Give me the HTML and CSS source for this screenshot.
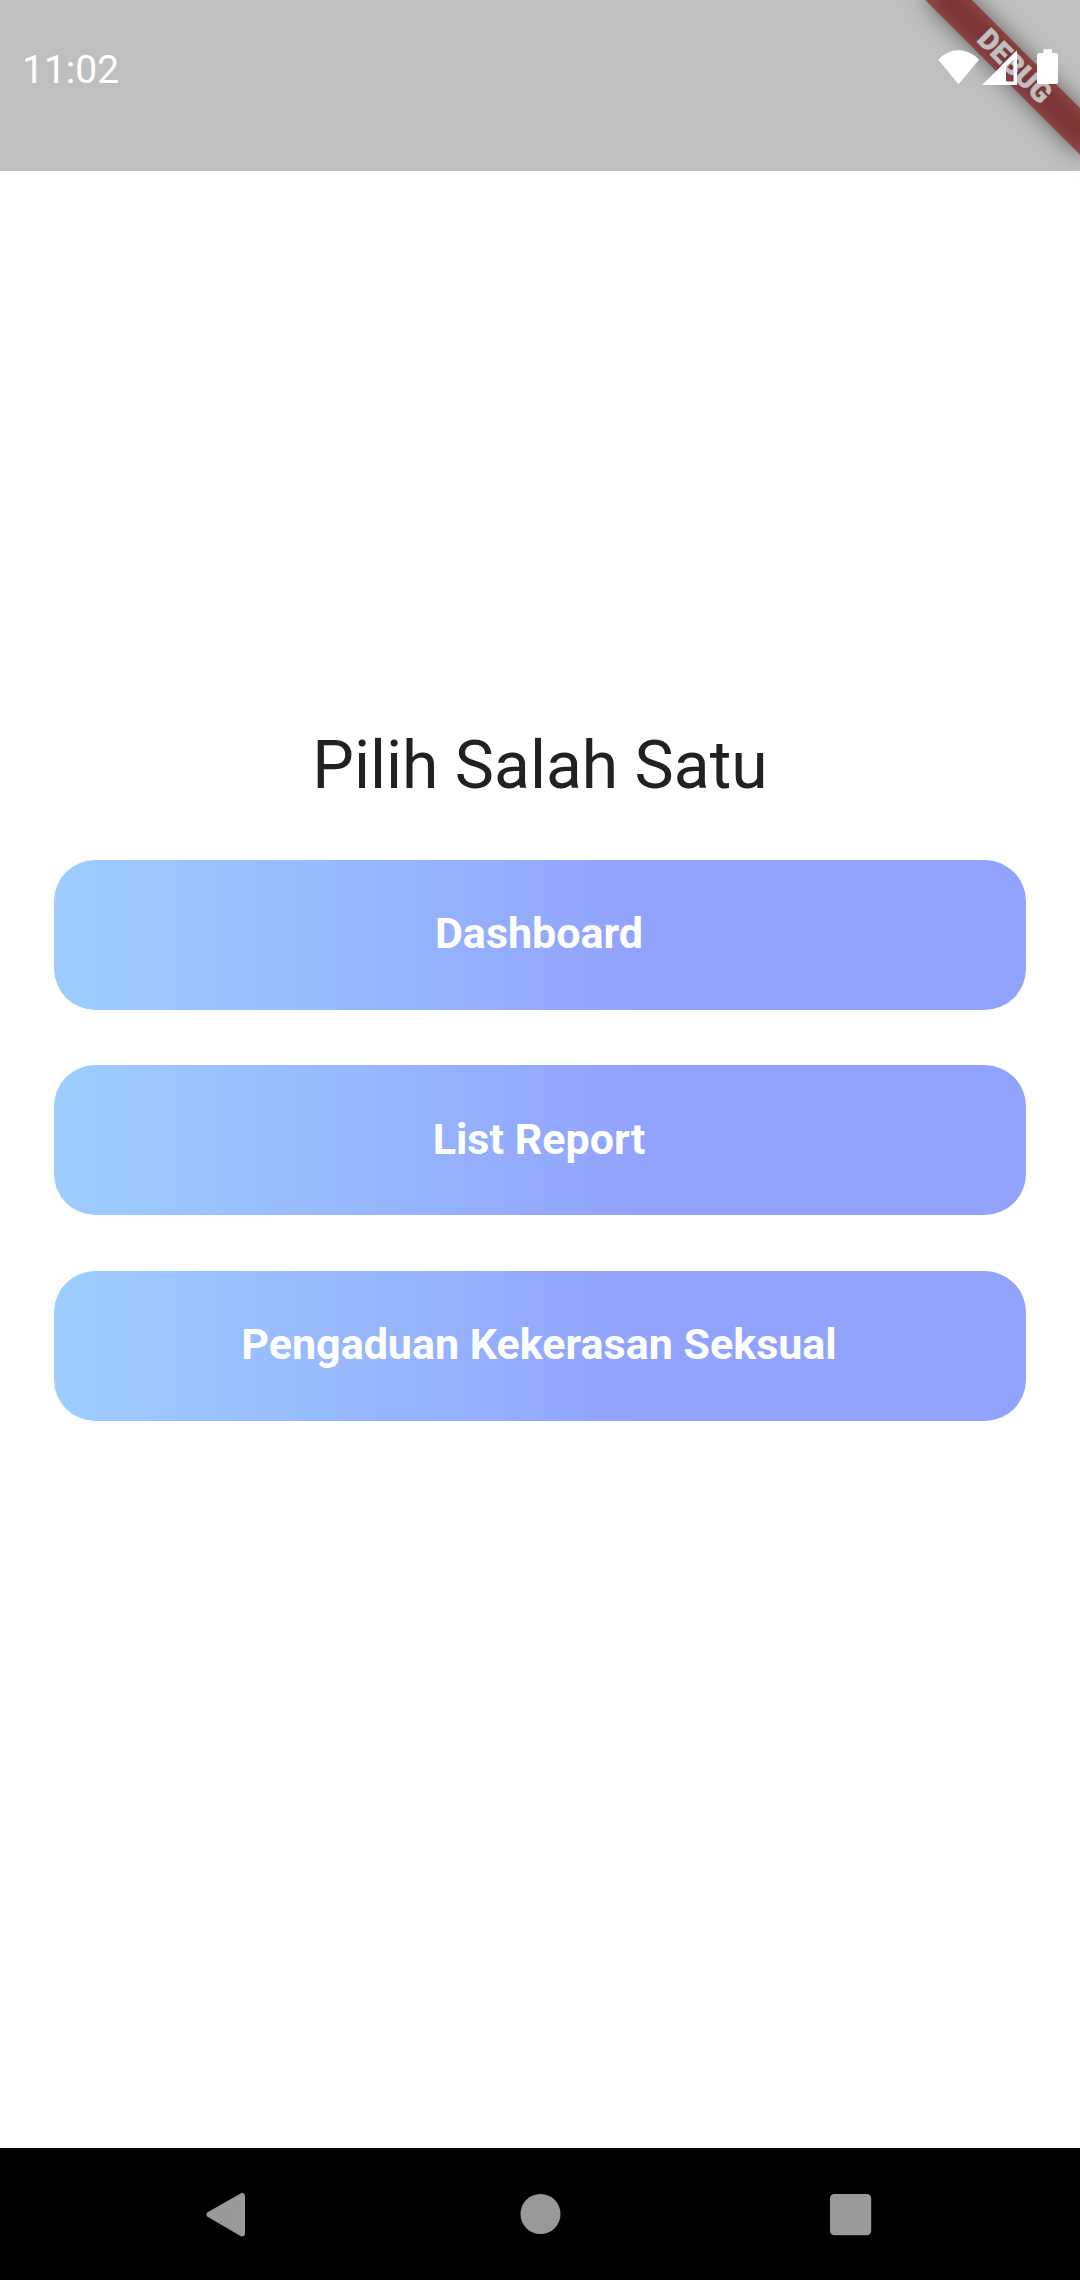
FILE: index.html
```html
<!DOCTYPE html>
<html lang="id">
<head>
<meta charset="utf-8">
<title>Pilih Salah Satu</title>
<link rel="stylesheet" href="styles.css">
</head>
<body>
<div class="screen">
  <div class="banner-clip">
    <div class="banner-shadow"></div>
    <div class="banner">DEBUG</div>
  </div>
  <header class="status-bar">
    <time class="clock">11:02</time>
    <svg class="status-icons" width="130" height="50" viewBox="935 40 130 50" fill="#fff" aria-hidden="true">
      <path d="M938.3 59.8Q947 50.3 958.6 50.3T979 59.8L958.6 84.3Z"/>
      <path fill-rule="evenodd" d="M982 85L1017 50.5V85ZM1006 66.5V81.5H1013.5V59.5Z"/>
      <path d="M1043.5 49.3H1052V53H1055.500Q1058 53 1058 55.500V81.500Q1058 84 1055.500 84H1039.500Q1037 84 1037 81.500V55.500Q1037 53 1039.500 53H1043.500Z"/>
    </svg>
  </header>
  <main class="content">
    <h1 class="title">Pilih Salah Satu</h1>
    <nav class="menu">
      <button class="menu-button">Dashboard</button>
      <button class="menu-button">List Report</button>
      <button class="menu-button">Pengaduan Kekerasan Seksual</button>
    </nav>
  </main>
  <footer class="nav-bar">
    <svg width="50" height="50" viewBox="0 0 50 50" aria-hidden="true"><path d="M8.500 25.500L41 7V44.500Z" fill="#999" stroke="#999" stroke-width="6" stroke-linejoin="round"/></svg>
    <svg width="50" height="50" viewBox="0 0 50 50" aria-hidden="true"><circle cx="26.500" cy="25" r="20" fill="#999"/></svg>
    <svg width="50" height="50" viewBox="0 0 50 50" aria-hidden="true"><rect x="4" y="5" width="41.200" height="41.200" rx="4.500" fill="#999"/></svg>
  </footer>
</div>
</body>
</html>
```
FILE: styles.css
```css
* { box-sizing: border-box; }

body {
  margin: 0;
  background: #fff;
  font-family: Roboto, "Liberation Sans", sans-serif;
}

.screen {
  position: relative;
  display: flex;
  flex-direction: column;
  width: 1080px;
  height: 2280px;
  overflow: hidden;
}

.status-bar {
  position: relative;
  display: flex;
  justify-content: space-between;
  height: 171px;
  padding: 40px 15px 0 22px;
  background: rgba(0, 0, 0, 0.25);
  color: #fff;
}

.clock {
  font-size: 39px;
  line-height: 60px;
}

/* Corner ribbon, drawn beneath the translucent status bar. */
.banner-clip {
  position: absolute;
  top: 0;
  right: 0;
  width: 240px;
  height: 240px;
  overflow: hidden;
}

.banner,
.banner-shadow {
  position: absolute;
  left: 64.25px;
  top: 49.25px;
  width: 220px;
  height: 33px;
  transform: rotate(45deg);
}

.banner-shadow {
  background: rgba(0, 0, 0, 0.5);
  filter: blur(11px);
}

.banner {
  background: rgba(183, 28, 28, 0.627);
  color: #fff;
  font-size: 28.5px;
  font-weight: 900;
  line-height: 33px;
  text-align: center;
  text-indent: 2px;
  -webkit-text-stroke: 0.4px #fff;
}

.content {
  flex: 1;
  padding: 0 54px;
}

.title {
  margin: 550px 0 0;
  color: #212121;
  font-size: 66px;
  font-weight: 400;
  line-height: 90px;
  text-align: center;
}

.menu {
  display: flex;
  flex-direction: column;
  gap: 55.250px;
  margin-top: 48.5px;
}

.menu-button {
  height: 150.250px;
  padding: 0 2px 3px 0;
  border: 0;
  border-radius: 41.250px;
  background: linear-gradient(to right, #9dceff, #92a3fd 60%);
  color: #fff;
  font-family: inherit;
  font-size: 43px;
  font-weight: 700;
}

.nav-bar {
  display: flex;
  justify-content: space-between;
  height: 132px;
  padding: 41px 204px 0 201px;
  background: #000;
}
```
